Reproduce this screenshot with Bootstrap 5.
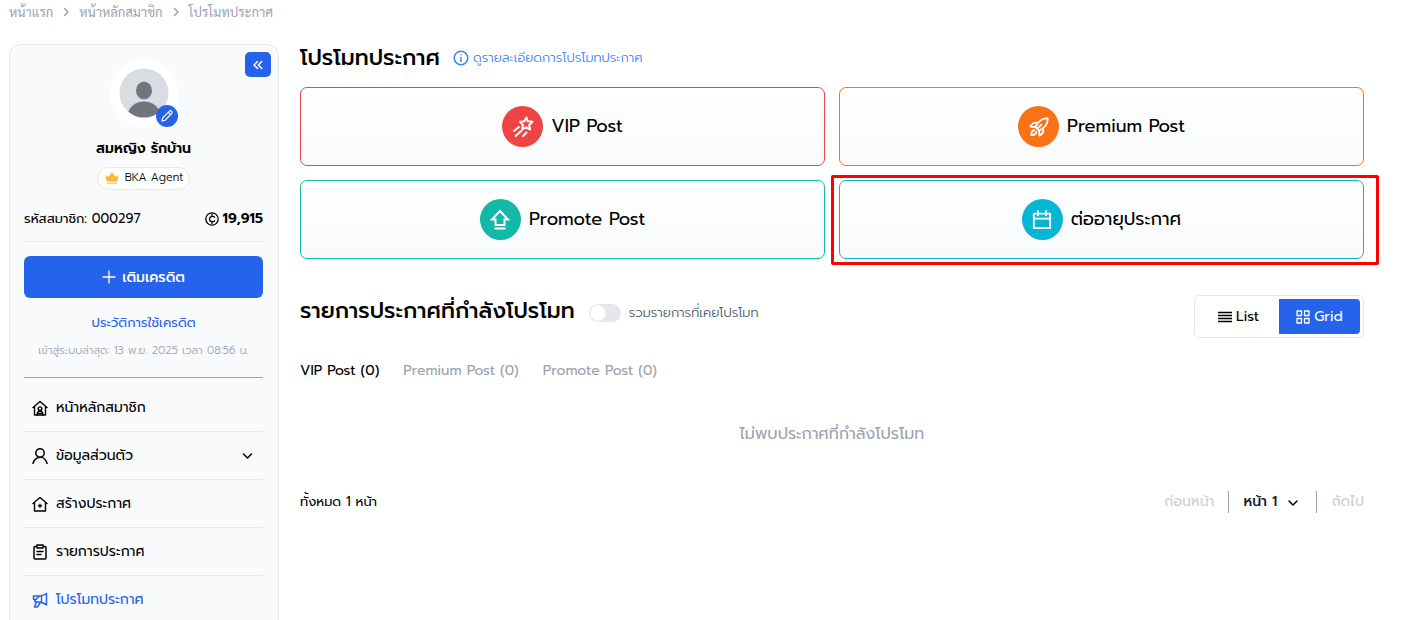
<!DOCTYPE html>
<html lang="th">
<head>
<meta charset="utf-8">
<meta name="viewport" content="width=device-width, initial-scale=1">
<title>โปรโมทประกาศ</title>
<link href="https://cdn.jsdelivr.net/npm/bootstrap@5.3.0/dist/css/bootstrap.min.css" rel="stylesheet">
<style>
:root{--brand:#2563eb;--line:#e2e8f0;--panel:#f8fafc;--muted:#9ca3af}
body{font-family:Prompt,Inter,"Noto Sans Thai","Noto Sans",sans-serif;font-size:14px;line-height:20px;color:#000;background:#fff;height:100vh;overflow:hidden}
a{text-decoration:none;color:inherit}
button{font:inherit}
svg{fill:none;stroke:currentColor;stroke-linecap:round;stroke-linejoin:round;flex:none;display:block}
.flat{stroke:none}
.square{stroke-linecap:butt;stroke-linejoin:miter}
.page{padding:0 37px 0 9px}
.crumbs{font-family:Sarabun,"Noto Sans Thai Looped","Open Sans",sans-serif;font-size:13px;line-height:24px;height:44px;color:var(--muted)}
.layout{gap:21px}
.side{width:270px;height:calc(100vh - 44px);overflow:hidden;background:var(--panel);border:1px solid var(--line);border-bottom:0;border-radius:12px 12px 0 0;padding:14px 15px 0 14px}
.fold{top:7px;right:7px;width:26px;height:25px;border-radius:5px;background:var(--brand);color:#fff}
.face{width:68px;height:68px;border-radius:50%;background:#fff}
.edit{right:0;bottom:0;width:22px;height:22px;border-radius:50%;background:var(--brand);color:#fff}
.who{font-weight:600;margin-top:9px;line-height:26px}
.rank{border:1px solid var(--line);border-radius:12px;background:#fff;font-size:11px;font-weight:300;line-height:20px;margin-top:5px;padding:0 6px 1px 7px;height:23px;gap:6px}
.credit{height:40px;margin-top:9px;margin-bottom:2px}
.member{font-size:13px}
.rule{border-top:1px solid var(--line)}
.top-up{background:var(--brand);color:#fff;height:42px;border-radius:6px;margin-top:14px;font-size:14px;font-weight:500;width:100%;gap:6px}
.history{color:var(--brand);font-size:13px;margin-top:15px}
.last{color:var(--muted);font-size:11px;font-weight:300;margin-top:8px;padding-bottom:16px;border-bottom:1px solid #94a3b8;white-space:nowrap}
.menu{padding-top:6px}
.menu li+li{border-top:1px solid var(--line)}
.menu a{height:47px;padding:0 8px}
.menu .on{color:var(--brand)}
.main-col{min-width:0}
.title{font-size:22px;line-height:28px;font-weight:500;margin:0}
.page-head{gap:13px}
.more{font-size:13px;font-weight:300;color:#3b82f6}
.plans{gap:14px;display:grid;grid-template-columns:1fr 1fr;margin-top:15px}
.plan{width:100%;height:79px;border:1px solid currentColor;border-radius:7px;background:linear-gradient(#fff,#f8fafc);font-size:18px}
.plan .name{color:#000;padding-bottom:2px}
.disc{width:41px;height:41px;border-radius:50%;background:currentColor}
.disc svg{color:#fff}
.vip{color:#ef4444}.premium{color:#f97316}.promote{color:#14b8a6}.renew{color:#06b6d4}
.marker{inset:-5px -15px -6px -8px;border:3px solid #f00;border-radius:2px;pointer-events:none}
.second{margin-top:36px}
.second .heading{gap:14px;padding-top:2px}
.form-switch .form-check-input.past{width:32px;height:18px;border:0;background-color:#e5e7eb;margin:0;--bs-form-switch-bg:url("data:image/svg+xml,%3csvg xmlns='http://www.w3.org/2000/svg' viewBox='-4 -4 8 8'%3e%3ccircle r='3.4' fill='%23fff'/%3e%3c/svg%3e")}
.past-label{font-size:13px;font-weight:300;color:#4b5563}
.past-row{padding-top:4px}
.views{border:1px solid var(--line);border-radius:5px;padding:3px}
.views button{height:35px;width:81px;border:0;background:none}
.views .on{background:var(--brand);color:#fff;border-radius:0 4px 4px 0}
.tabs{gap:24px;margin-top:23px}
.tabs button{border:0;background:none;padding:0;color:var(--muted)}
.tabs .on{color:#000}
.none{font-size:16px;color:var(--muted);line-height:24px;margin:41px 0 0}
.pager{margin-top:45px}
.total{font-size:13px}
.pager .step{color:#d1d5db;border:0;background:none;padding:0;font-weight:500}
.pager .sel{border:solid var(--muted);border-width:0 1px;padding:0 17px 0 14px;margin:0 14px}
.pager select{appearance:none;border:0;background:none;font-weight:500;color:#111827;padding:0 22px 0 0;line-height:22px;height:22px}
.pager .sel svg{right:17px;top:6px;pointer-events:none}
</style>
</head>
<body>
<svg width="0" height="0" class="position-absolute" aria-hidden="true">
<symbol id="chev" viewBox="0 0 12 12"><path d="M2 4l4 4 4-4"/></symbol>
<symbol id="next" viewBox="0 0 10 12"><path d="M3.500 2.500L7 6 3.500 9.500"/></symbol>
</svg>
<div class="page">
<nav class="crumbs" aria-label="breadcrumb">
<ol class="list-unstyled d-flex align-items-center mb-0">
<li><a href="#">หน้าแรก</a></li>
<li class="mx-2"><svg width="10" height="12" stroke-width="1.500"><use href="#next"/></svg></li>
<li><a href="#">หน้าหลักสมาชิก</a></li>
<li class="mx-2"><svg width="10" height="12" stroke-width="1.500"><use href="#next"/></svg></li>
<li><a href="#">โปรโมทประกาศ</a></li>
</ol>
</nav>
<div class="layout d-flex">
<aside class="side position-relative flex-shrink-0">
<button class="fold btn p-0 position-absolute d-flex align-items-center justify-content-center" aria-label="ย่อเมนู"><svg width="12" height="12" viewBox="0 0 12 12" stroke-width="1.500"><path d="M5.500 2.500L2 6l3.500 3.500M9.800 2.500L6.300 6l3.500 3.500"/></svg></button>
<div class="d-flex flex-column align-items-center">
<div class="face position-relative d-flex align-items-center justify-content-center">
<svg class="flat" width="50" height="50" viewBox="0 0 50 50"><defs><clipPath id="round"><circle cx="25" cy="25" r="24.500"/></clipPath></defs><g clip-path="url(#round)"><path fill="#d9dde1" d="M0 0h50v50H0z"/><ellipse cx="25" cy="22.500" rx="8" ry="9" fill="#70767c"/><ellipse cx="25" cy="47" rx="16" ry="13.500" fill="#70767c"/></g></svg>
<button class="edit btn p-0 position-absolute d-flex align-items-center justify-content-center" aria-label="แก้ไขรูป"><svg width="14" height="14" viewBox="0 0 14 14" stroke-width="1.200"><path d="M2 12l.6-3L9.300 2.300a1.400 1.400 0 0 1 2.300 2.200L5 11.300zM8.300 3.300l2.300 2.300"/></svg></button>
</div>
<div class="who">สมหญิง รักบ้าน</div>
<div class="rank d-flex align-items-center"><svg class="flat" width="14" height="14" viewBox="0 0 14 14"><path fill="#fbb731" d="M.3 4l3.200 2L7 1l3.500 5 3.200-2-1.500 6.500H1.800z"/><path fill="#fcd27a" d="M2 11.500h10V13H2z"/></svg>BKA Agent</div>
</div>
<div class="credit d-flex justify-content-between align-items-center"><span class="member">รหัสสมาชิก: 000297</span><b class="d-flex align-items-center gap-1 fw-semibold"><svg width="14" height="14" viewBox="0 0 14 14" stroke-width="1.300"><circle cx="7" cy="7" r="6.200"/><path d="M9.500 5.200C8.500 3.800 4.700 4 4.500 7s4 3.200 5 1.800M7 2.500v2M7 9.500v2"/></svg>19,915</b></div>
<div class="rule"></div>
<button class="top-up btn d-flex align-items-center justify-content-center"><svg width="14" height="14" viewBox="0 0 14 14" stroke-width="1.300"><path d="M7 1v12M1 7h12"/></svg>เติมเครดิต</button>
<div class="text-center history"><a href="#">ประวัติการใช้เครดิต</a></div>
<div class="text-center last">เข้าสู่ระบบล่าสุด: 13 พ.ย. 2025 เวลา 08:56 น.</div>
<ul class="menu list-unstyled mb-0">
<li><a href="#" class="d-flex align-items-center gap-2"><svg width="16" height="16" viewBox="0 0 16 16" stroke-width="1.400"><path d="M1 7.500l7-6 7 6M2.500 6.500V15h11V6.500"/><circle cx="8" cy="8.700" r="1.800"/><path d="M5.200 15c0-3 1.200-4 2.800-4s2.800 1 2.800 4M5.500 13.500h5"/></svg>หน้าหลักสมาชิก</a></li>
<li><a href="#" class="d-flex align-items-center gap-2"><svg width="16" height="16" viewBox="0 0 16 16" stroke-width="1.500"><circle cx="8" cy="5" r="4.200"/><path d="M1 15.500C2 11.500 5 9.500 8 9.200s6 2.300 7 6.300"/></svg>ข้อมูลส่วนตัว<svg class="ms-auto" width="15" height="12" stroke-width="1.500"><use href="#chev"/></svg></a></li>
<li><a href="#" class="d-flex align-items-center gap-2"><svg width="16" height="16" viewBox="0 0 16 16" stroke-width="1.400"><path d="M1 7.500l7-6 7 6M2.500 6.500V15h11V6.500M6.500 9.700h3M8 8.200v3"/></svg>สร้างประกาศ</a></li>
<li><a href="#" class="d-flex align-items-center gap-2"><svg width="16" height="16" viewBox="0 0 16 16" stroke-width="1.500"><path d="M5 2.500H3a1 1 0 0 0-1 1V14a1 1 0 0 0 1 1h10a1 1 0 0 0 1-1V3.500a1 1 0 0 0-1-1h-2M5 1h6v3H5zM5 7.500h6M5 10.500h4"/></svg>รายการประกาศ</a></li>
<li><a href="#" class="on d-flex align-items-center gap-2"><svg width="16" height="16" viewBox="0 0 16 16" stroke-width="1.500"><path d="M14.500 1.500v11.500C12 10.800 9 10 6 10H3V8.500M14.500 1.500C12.500 3.200 10 4 7 4H1.500v3.500H4l3-3M9.500 4v6M4.500 10L2.500 15h3l3-5"/></svg>โปรโมทประกาศ</a></li>
</ul>
</aside>
<main class="main-col flex-grow-1">
<div class="page-head d-flex align-items-center"><h1 class="title">โปรโมทประกาศ</h1><a href="#" class="more d-flex align-items-center gap-1"><svg width="16" height="16" viewBox="0 0 16 16" stroke-width="1.500"><circle cx="8" cy="8" r="6.800"/><path d="M8 7.500v4M8 4.700v.1"/></svg>ดูรายละเอียดการโปรโมทประกาศ</a></div>
<div class="plans">
<button class="plan vip d-flex align-items-center justify-content-center gap-2"><span class="disc d-flex align-items-center justify-content-center"><svg width="22" height="22" viewBox="0 0 22 22" stroke-width="2"><path d="M14.300 1.500l1.600 3.800 4.600.5-3.300 3.200.9 4.500-4-2.100-4 2.100.8-4.500L8 5.800l4.500-.5zM7 11l-5 4M9 15.300L3.500 20M14.500 16.500L11 20"/></svg></span><span class="name">VIP Post</span></button>
<button class="plan premium d-flex align-items-center justify-content-center gap-2"><span class="disc d-flex align-items-center justify-content-center"><svg width="20" height="20" viewBox="0 0 22 22" stroke-width="2"><path d="M20.500 1.500C15 1 10.500 4 7 11l4 4c7-3.500 10-8 9.500-13.500zM10 6.500C6 5.500 3.500 7 1.500 10.500L7 11M15.500 12c1 4-.5 6.500-4 8.500L11 15M6 14.500c-3 .5-3.500 2.500-3.500 5.500 3 0 5-.5 5.500-3.500M9.500 12.500L13.500 8.500"/></svg></span><span class="name">Premium Post</span></button>
<button class="plan promote d-flex align-items-center justify-content-center gap-2"><span class="disc d-flex align-items-center justify-content-center"><svg class="square" width="22" height="22" viewBox="0 0 22 22" stroke-width="2"><path d="M11 2L3 10.500h3.500V16h9v-5.500H19zM5.500 19.500h11"/></svg></span><span class="name">Promote Post</span></button>
<div class="position-relative"><button class="plan renew d-flex align-items-center justify-content-center gap-2"><span class="disc d-flex align-items-center justify-content-center"><svg width="20" height="20" viewBox="0 0 22 22" stroke-width="2"><path d="M2 4h18v16H2zM2 9.500h18M6.500 1v5M15.500 1v5"/></svg></span><span class="name">ต่ออายุประกาศ</span></button><div class="marker position-absolute"></div></div>
</div>
<div class="second d-flex align-items-start justify-content-between">
<div class="heading d-flex align-items-center"><h2 class="title">รายการประกาศที่กำลังโปรโมท</h2>
<div class="past-row form-check form-switch d-flex align-items-center gap-2 ps-0 mb-0"><input class="form-check-input past float-none" type="checkbox" role="switch" id="past"><label class="past-label" for="past">รวมรายการที่เคยโปรโมท</label></div></div>
<div class="views d-flex"><button class="d-flex align-items-center justify-content-center gap-1"><svg class="square" width="14" height="14" viewBox="0 0 14 14" stroke-width="1.500"><path d="M0 2.500h14M0 5.500h14M0 8.500h14M0 11.500h14"/></svg>List</button><button class="on d-flex align-items-center justify-content-center gap-1"><svg width="14" height="14" viewBox="0 0 14 14" stroke-width="1.300"><path d="M1 1h4.500v4.500H1zM8.500 1H13v4.500H8.500zM1 8.500h4.500V13H1zM8.500 8.500H13V13H8.500z"/></svg>Grid</button></div>
</div>
<div class="tabs d-flex"><button class="on">VIP Post (0)</button><button>Premium Post (0)</button><button>Promote Post (0)</button></div>
<p class="none text-center">ไม่พบประกาศที่กำลังโปรโมท</p>
<div class="pager d-flex align-items-center"><span class="total">ทั้งหมด 1 หน้า</span>
<button class="step ms-auto">ก่อนหน้า</button><div class="sel position-relative"><select aria-label="หน้า"><option>หน้า 1</option></select><svg class="position-absolute" width="12" height="12" stroke-width="1.500"><use href="#chev"/></svg></div><button class="step">ถัดไป</button></div>
</main>
</div>
</div>
<script src="https://cdn.jsdelivr.net/npm/bootstrap@5.3.0/dist/js/bootstrap.bundle.min.js"></script>
</body>
</html>
